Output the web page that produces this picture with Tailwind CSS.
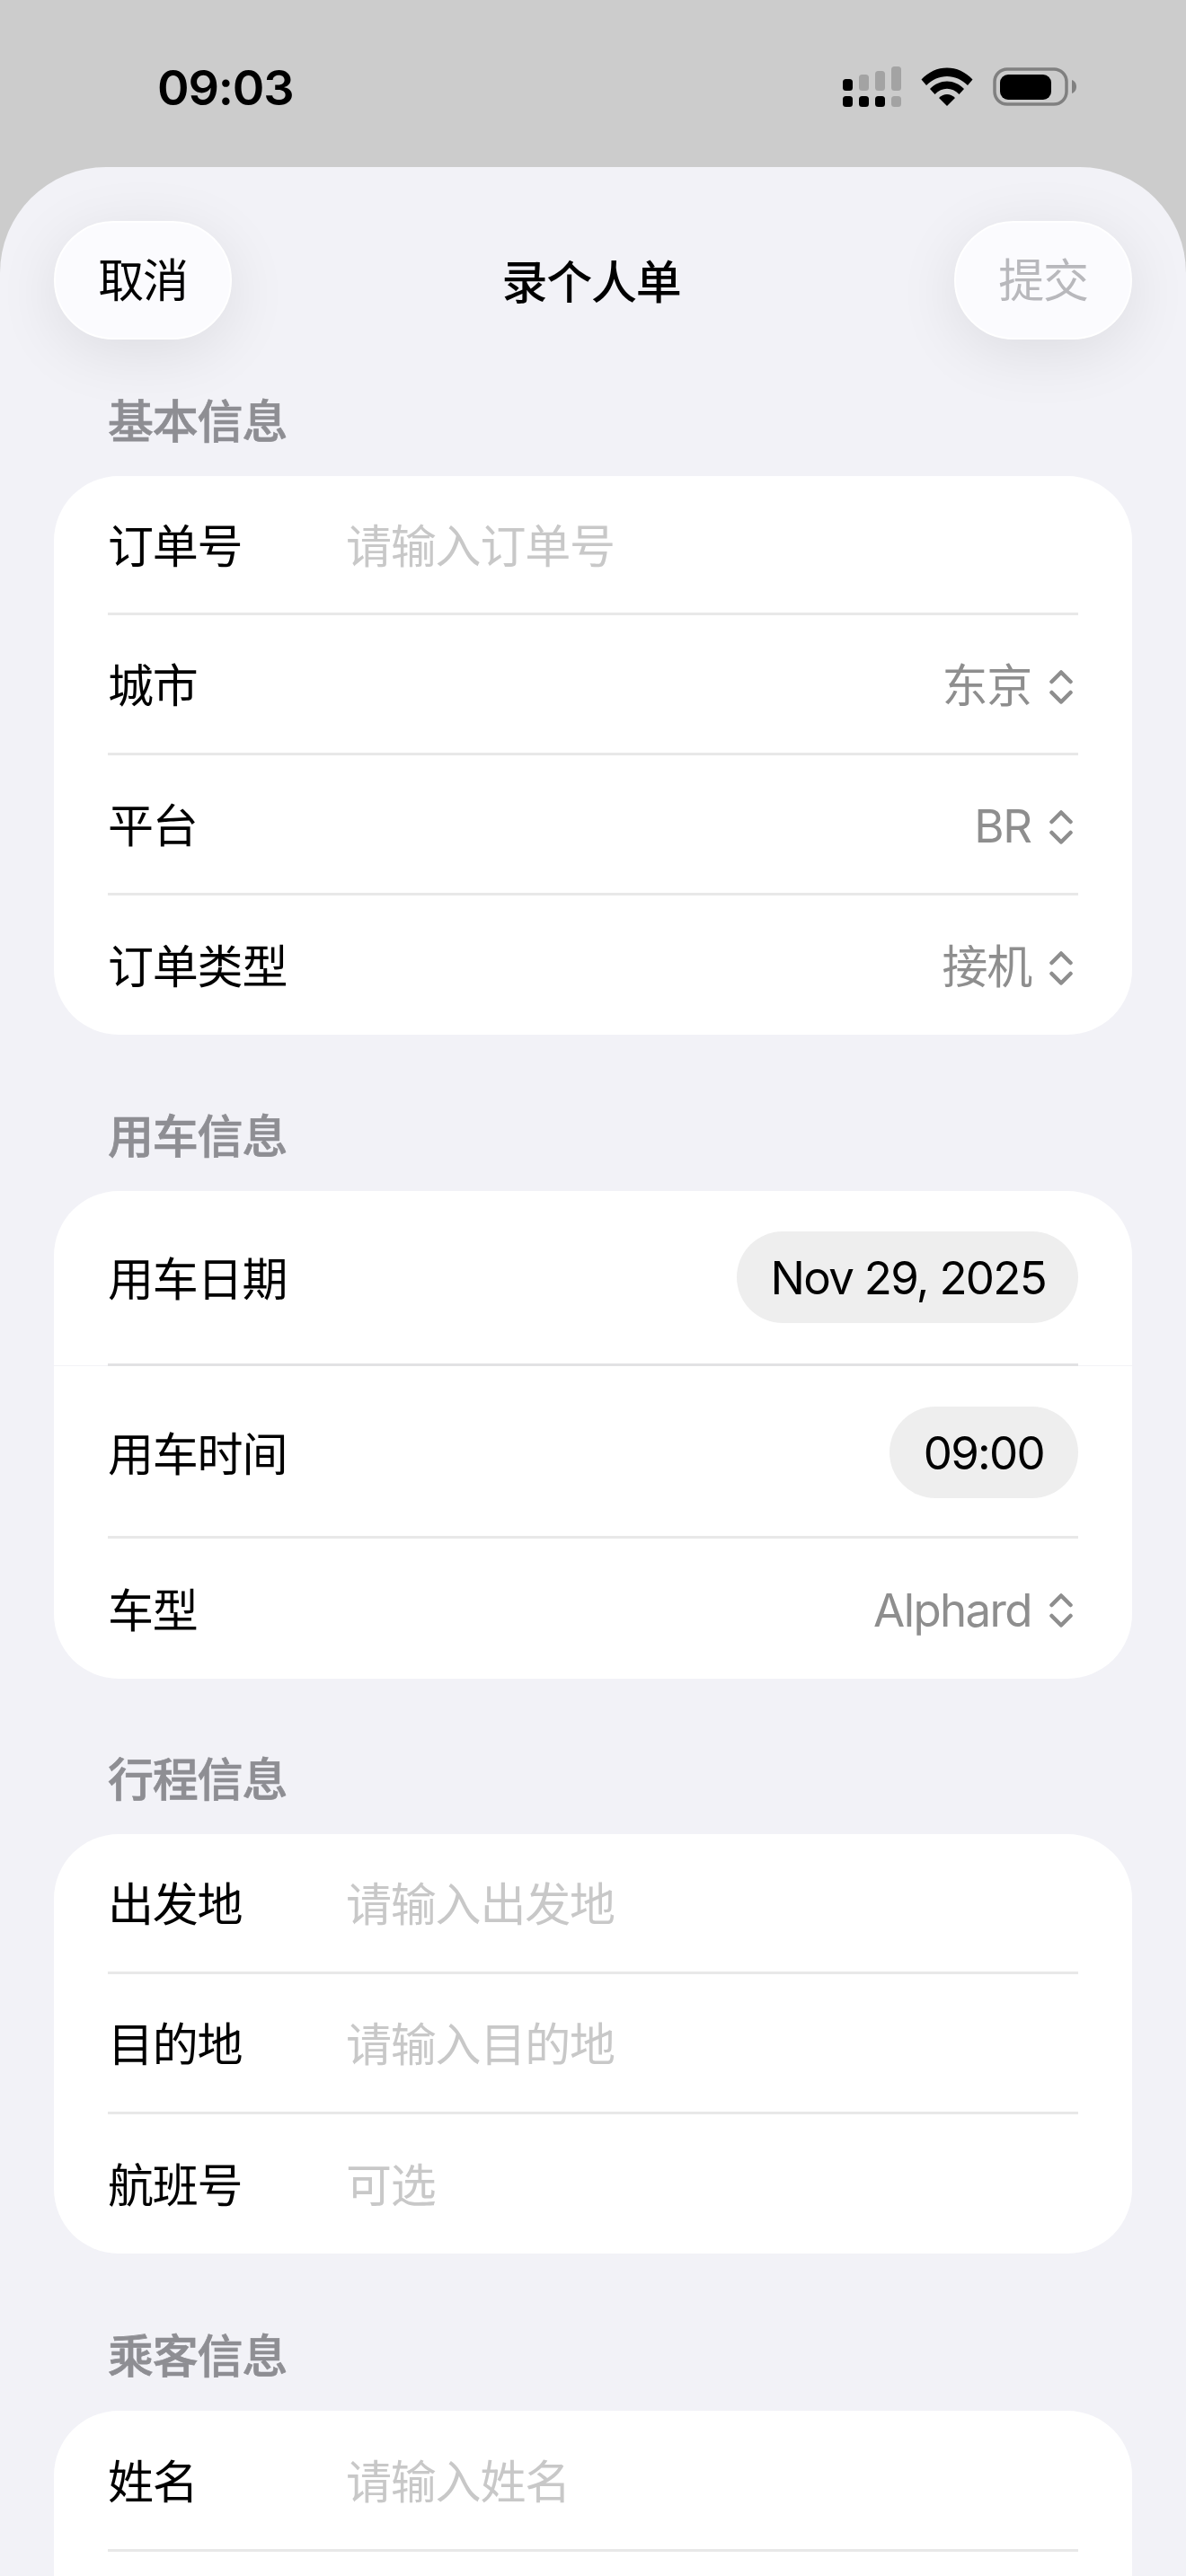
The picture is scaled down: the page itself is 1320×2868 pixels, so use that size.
<!DOCTYPE html>
<html lang="zh-CN">
<head>
    <meta charset="UTF-8">
    <meta name="viewport" content="width=device-width, initial-scale=1.0">
    <title>录个人单</title>
    <script src="https://cdn.jsdelivr.net/npm/@tailwindcss/browser@4"></script>
</head>
<body class="bg-[#cccccc]">
    <div class="h-[2868px] w-[1320px] overflow-hidden bg-[#cccccc] font-['Inter','Noto_Sans_CJK_SC',sans-serif] text-[51px] tracking-[-1.2px] text-black">
        <!-- Status bar -->
        <div class="flex h-[186px] items-start justify-between pl-[175px] pr-[121px]">
            <span class="mt-[66px] text-[54px] leading-[64px] font-semibold tracking-[-1.2px]">09:03</span>
            <div class="mt-[74px] flex items-start">
                <svg width="65" height="45" viewBox="0 0 65 45" class="block">
                    <rect x="0" y="14" width="11" height="13" rx="3.5" fill="#000"/>
                    <rect x="18" y="9" width="11" height="18" rx="3.5" fill="#a3a3a3"/>
                    <rect x="36" y="5" width="11" height="22" rx="3.5" fill="#a3a3a3"/>
                    <rect x="54" y="0" width="11" height="27" rx="3.5" fill="#a3a3a3"/>
                    <rect x="0" y="33" width="11" height="12" rx="3.5" fill="#000"/>
                    <rect x="18" y="33" width="11" height="12" rx="3.5" fill="#000"/>
                    <rect x="36" y="33" width="11" height="12" rx="3.5" fill="#000"/>
                    <rect x="54" y="33" width="11" height="12" rx="3.5" fill="#a3a3a3"/>
                </svg>
                <svg width="58" height="43" viewBox="0 0 58 43" class="ml-[22px] mt-[1px] block">
                    <path d="M0.5 13.5 C16 -4 42 -4 57.5 13.5 L52 20 C39 6.5 19 6.5 6 20 Z" fill="#000"/>
                    <path d="M10 24 C21 12.5 37 12.5 48 24 L42.5 30 C34.5 21.5 23.5 21.5 15.5 30 Z" fill="#000"/>
                    <path d="M20 34 C25.5 28.5 32.5 28.5 38 34 L29 43 Z" fill="#000"/>
                </svg>
                <svg width="94" height="44" viewBox="0 0 94 44" class="ml-[22px] mt-[1px] block">
                    <rect x="2" y="2" width="80" height="39" rx="14" fill="none" stroke="#808080" stroke-width="3.5"/>
                    <rect x="8" y="8" width="57" height="28" rx="9" fill="#000"/>
                    <path d="M88 14 C91 15 93 18 93 21.5 C93 25 91 28 88 29 Z" fill="#808080"/>
                </svg>
            </div>
        </div>

        <!-- Sheet -->
        <div class="h-[2682px] overflow-hidden rounded-t-[118px] bg-[#f2f2f7] px-[60px]">
            <div class="flex h-[224px] items-start justify-between pt-[60px]">
                <button class="flex h-[132px] w-[198px] items-center justify-center rounded-[66px] border-2 border-white bg-[#fbfbfe] pt-[3px] tracking-[-1.2px] shadow-[0_14px_70px_rgba(0,0,0,0.09)]">取消</button>
                <span class="mr-[4px] mt-[42px] font-medium leading-[54px]">录个人单</span>
                <button class="flex h-[132px] w-[198px] items-center justify-center rounded-[66px] border-2 border-white bg-[#fbfbfe] pt-[3px] tracking-[-1.2px] text-[#b8b8bc] shadow-[0_14px_70px_rgba(0,0,0,0.09)]">提交</button>
            </div>

            <!-- 基本信息 -->
            <h2 class="relative pl-[60px] leading-[120px] font-medium text-[#8e8e93] [-webkit-text-stroke:0.7px_#8e8e93]">基本信息</h2>
            <div class="overflow-hidden rounded-[72px] bg-white">
                <div class="flex h-[152px] items-center px-[60px] pt-[6px]"><span class="w-[265px]">订单号</span><span class="text-[#c8c8c8]">请输入订单号</span></div>
                <div class="mx-[60px] h-[3px] bg-[#e8e8e8]"></div>
                <div class="flex h-[153px] items-center justify-between px-[60px] pt-[6px]"><span>城市</span><span class="flex items-center text-[#8e8e8e]">东京<svg width="26" height="38" viewBox="0 0 26 38" class="ml-[20px] mr-[6px] block" fill="none" stroke="#8e8e8e" stroke-width="4.5" stroke-linecap="round" stroke-linejoin="round"><path d="M2.5 13 L13 2.5 L23.5 13"/><path d="M2.5 25 L13 35.5 L23.5 25"/></svg></span></div>
                <div class="mx-[60px] h-[3px] bg-[#e8e8e8]"></div>
                <div class="flex h-[153px] items-center justify-between px-[60px] pt-[6px]"><span>平台</span><span class="flex items-center text-[#8e8e8e]">BR<svg width="26" height="38" viewBox="0 0 26 38" class="ml-[20px] mr-[6px] block" fill="none" stroke="#8e8e8e" stroke-width="4.5" stroke-linecap="round" stroke-linejoin="round"><path d="M2.5 13 L13 2.5 L23.5 13"/><path d="M2.5 25 L13 35.5 L23.5 25"/></svg></span></div>
                <div class="mx-[60px] h-[3px] bg-[#e8e8e8]"></div>
                <div class="flex h-[155px] items-center justify-between px-[60px] pt-[6px]"><span>订单类型</span><span class="flex items-center text-[#8e8e8e]">接机<svg width="26" height="38" viewBox="0 0 26 38" class="ml-[20px] mr-[6px] block" fill="none" stroke="#8e8e8e" stroke-width="4.5" stroke-linecap="round" stroke-linejoin="round"><path d="M2.5 13 L13 2.5 L23.5 13"/><path d="M2.5 25 L13 35.5 L23.5 25"/></svg></span></div>
            </div>

            <!-- 用车信息 -->
            <h2 class="mt-[54px] pl-[60px] leading-[120px] font-medium text-[#8e8e93] [-webkit-text-stroke:0.7px_#8e8e93]">用车信息</h2>
            <div class="overflow-hidden rounded-[72px] bg-white">
                <div class="flex h-[192px] items-center justify-between px-[60px]"><span class="pt-[6px]">用车日期</span><span class="flex h-[102px] items-center rounded-[51px] bg-[#eeeeee] pl-[38px] pr-[36px] pt-[2px] tracking-[-1.7px]">Nov 29, 2025</span></div>
                <div class="h-[3px] border-b border-[#f3f3f6] px-[60px]"><div class="h-[3px] bg-[#e2e2e4]"></div></div>
                <div class="flex h-[189px] items-center justify-between px-[60px] pt-[3px]"><span class="pt-[6px]">用车时间</span><span class="flex h-[102px] items-center rounded-[51px] bg-[#eeeeee] pl-[38px] pr-[38px] pt-[2px] tracking-[-1.7px]">09:00</span></div>
                <div class="mx-[60px] h-[3px] bg-[#e8e8e8]"></div>
                <div class="flex h-[156px] items-center justify-between px-[60px] pt-[4px]"><span class="pt-[2px]">车型</span><span class="flex items-center tracking-[-1.6px] text-[#8e8e8e]">Alphard<svg width="26" height="38" viewBox="0 0 26 38" class="ml-[20px] mr-[6px] block" fill="none" stroke="#8e8e8e" stroke-width="4.5" stroke-linecap="round" stroke-linejoin="round"><path d="M2.5 13 L13 2.5 L23.5 13"/><path d="M2.5 25 L13 35.5 L23.5 25"/></svg></span></div>
            </div>

            <!-- 行程信息 -->
            <h2 class="mt-[53px] pl-[60px] leading-[120px] font-medium text-[#8e8e93] [-webkit-text-stroke:0.7px_#8e8e93]">行程信息</h2>
            <div class="overflow-hidden rounded-[72px] bg-white">
                <div class="flex h-[153px] items-center px-[60px] pt-[6px]"><span class="w-[265px]">出发地</span><span class="text-[#c8c8c8]">请输入出发地</span></div>
                <div class="mx-[60px] h-[3px] bg-[#e8e8e8]"></div>
                <div class="flex h-[153px] items-center px-[60px] pt-[6px]"><span class="w-[265px]">目的地</span><span class="text-[#c8c8c8]">请输入目的地</span></div>
                <div class="mx-[60px] h-[3px] bg-[#e8e8e8]"></div>
                <div class="flex h-[155px] items-center px-[60px] pt-[6px]"><span class="w-[265px]">航班号</span><span class="text-[#c8c8c8]">可选</span></div>
            </div>

            <!-- 乘客信息 -->
            <h2 class="mt-[55px] pl-[60px] leading-[120px] font-medium text-[#8e8e93] [-webkit-text-stroke:0.7px_#8e8e93]">乘客信息</h2>
            <div class="overflow-hidden rounded-t-[72px] bg-white">
                <div class="flex h-[154px] items-center px-[60px] pt-[6px]"><span class="w-[265px]">姓名</span><span class="text-[#c8c8c8]">请输入姓名</span></div>
                <div class="mx-[60px] h-[3px] bg-[#e8e8e8]"></div>
                <div class="h-[153px]"></div>
            </div>
        </div>
    </div>
</body>
</html>
